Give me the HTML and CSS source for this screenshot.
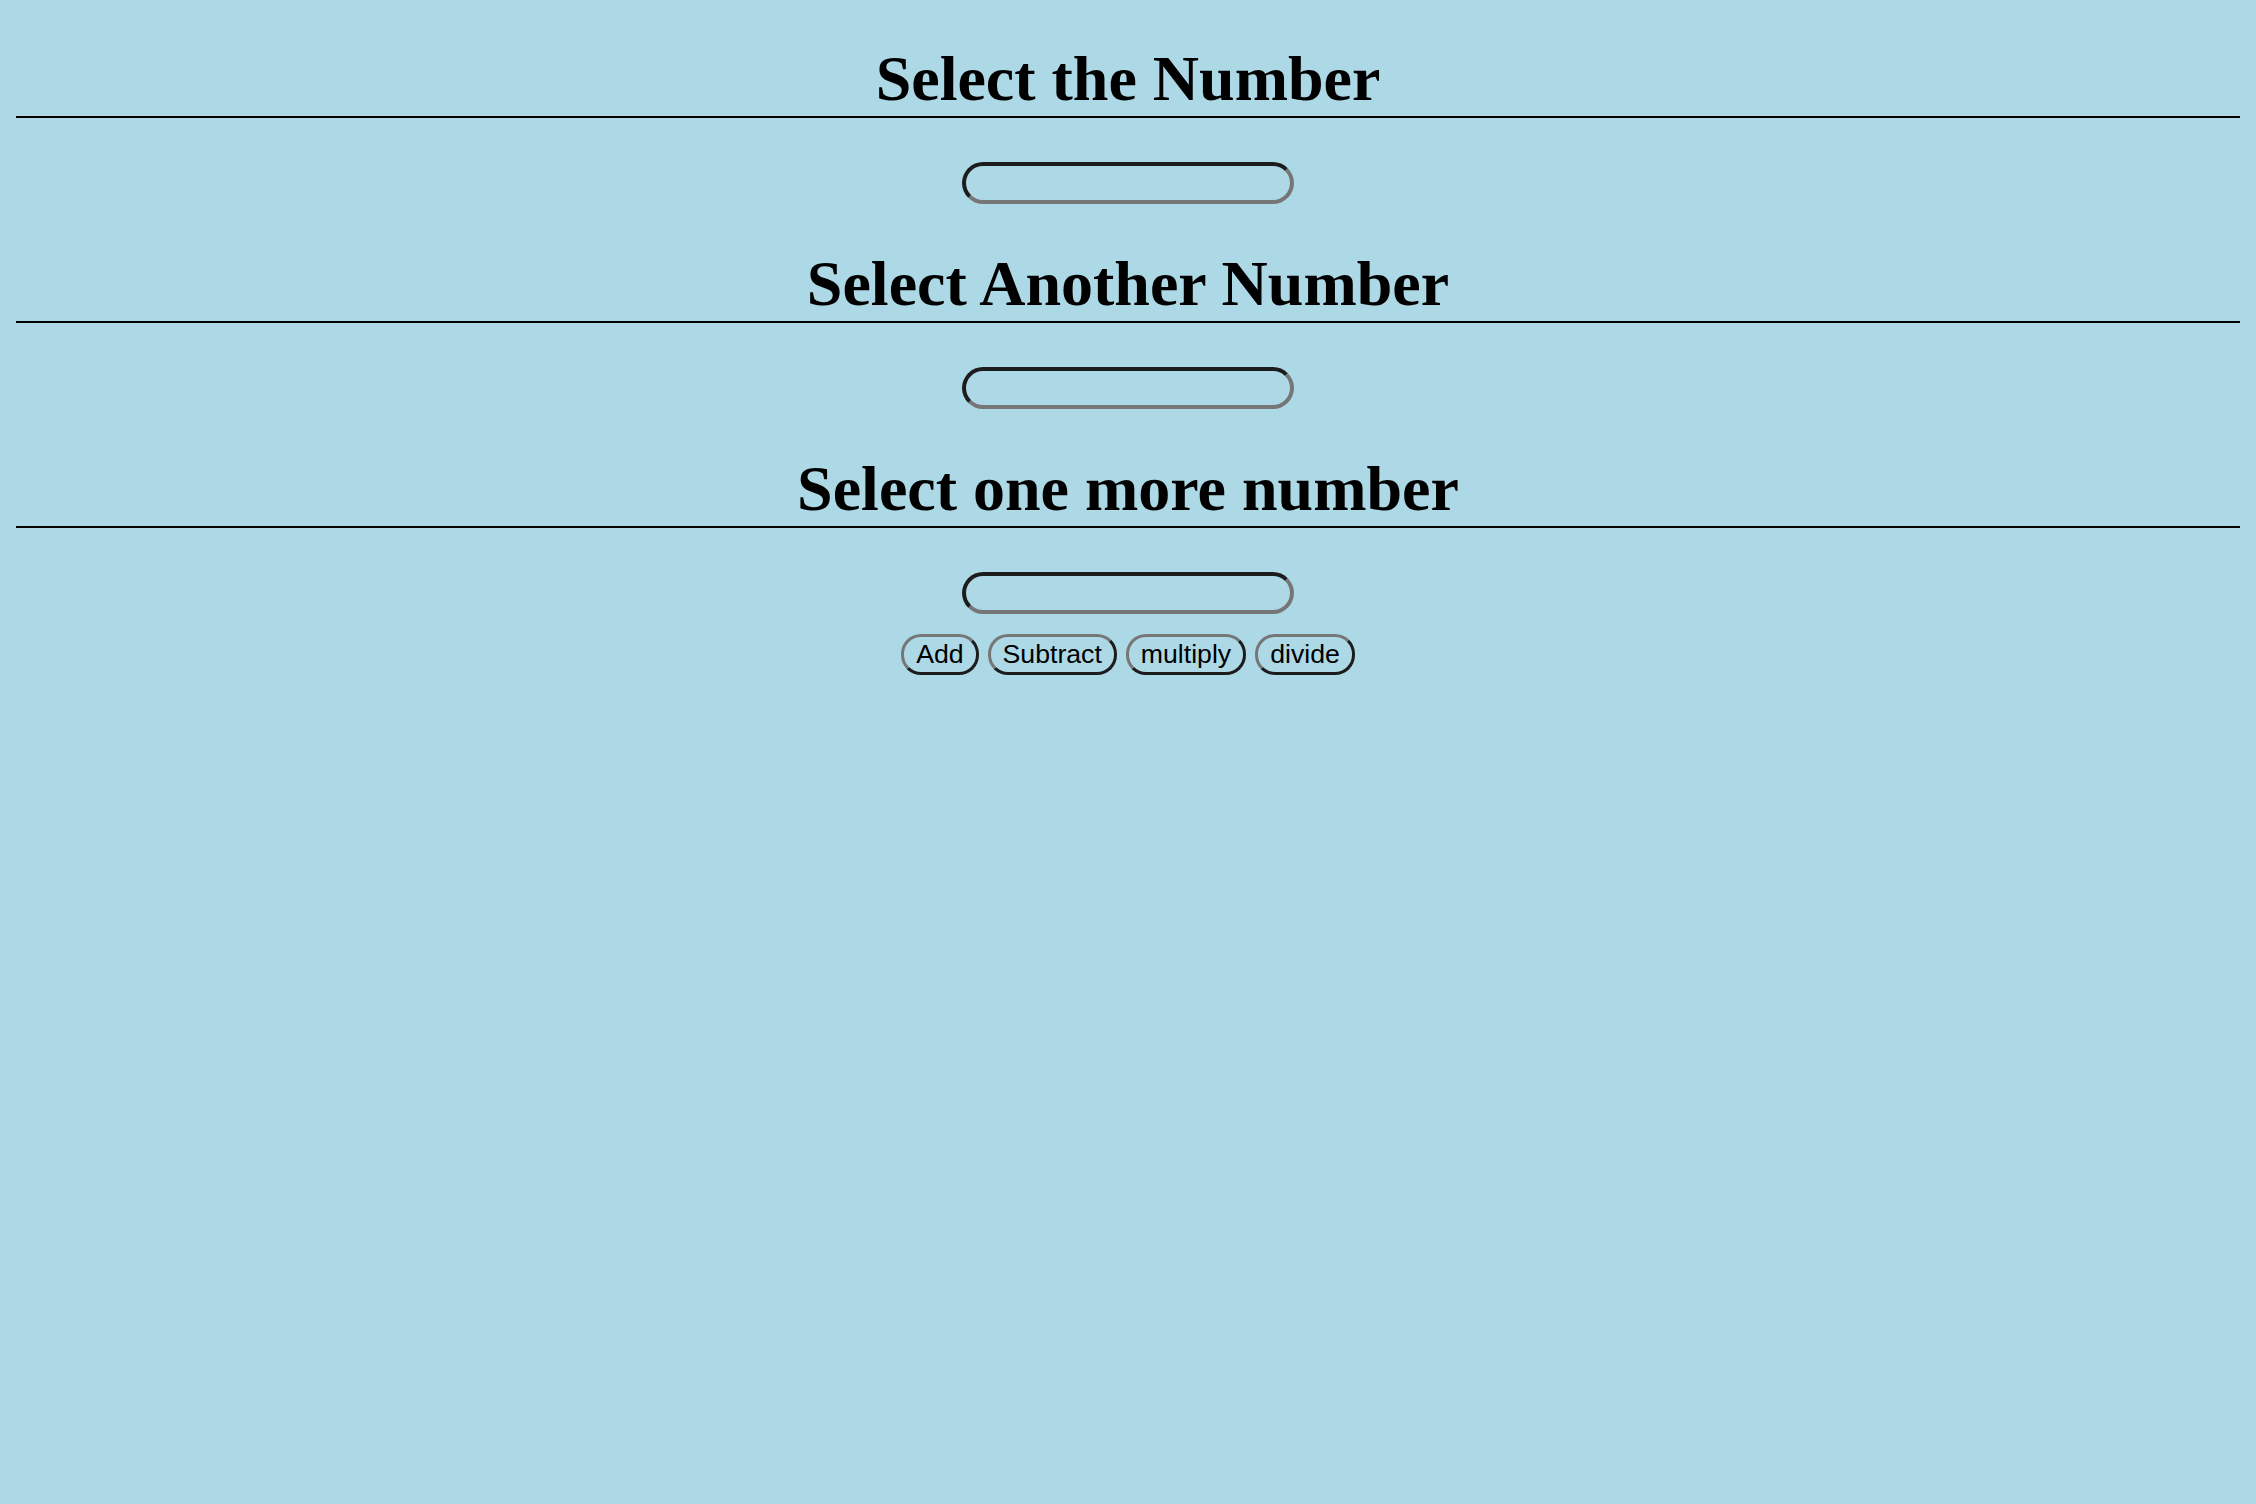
FILE: index.html
```html
<!DOCTYPE html>
<html>
<head>
<meta charset="utf-8">
<title>Calculator</title>
<link rel="stylesheet" href="styles.css">
</head>
<body>
<h1 class="title">Select the Number</h1>
<div class="field"><input class="num" type="text"></div>
<h1 class="title">Select Another Number</h1>
<div class="field"><input class="num" type="text"></div>
<h1 class="title">Select one more number</h1>
<div class="field"><input class="num" type="text"></div>
<div class="buttons">
  <button class="btn">Add</button>
  <button class="btn">Subtract</button>
  <button class="btn">multiply</button>
  <button class="btn">divide</button>
</div>
</body>
</html>
```

FILE: styles.css
```css
html {
  background: #add8e6;
}
body {
  margin: 0;
  padding: 42px 16px 16px;
  background: #add8e6;
  font-family: "Liberation Serif", "Times New Roman", serif;
  font-size: 32px;
  color: #000;
}
.title {
  font-family: "Liberation Serif", "Times New Roman", serif;
  font-size: 64px;
  font-weight: bold;
  line-height: 74px;
  text-align: center;
  margin: 43px 0;
  border-bottom: 2px solid #000;
}
.title:first-child {
  margin-top: 0;
}
.field {
  display: flex;
  justify-content: center;
  padding-top: 1px;
}
.num {
  box-sizing: border-box;
  width: 332px;
  height: 42px;
  margin: 0;
  padding: 2px 4px;
  background: transparent;
  border-width: 4px;
  border-style: solid;
  border-top-color: #1c1c1c;
  border-left-color: #1c1c1c;
  border-bottom-color: #767676;
  border-right-color: #767676;
  border-radius: 21px;
  font-family: "Liberation Sans", Arial, sans-serif;
  font-size: 26.67px;
  outline: none;
}
.buttons {
  display: flex;
  justify-content: center;
  gap: 9px;
  margin-top: 20px;
}
.btn {
  margin: 0;
  padding: 2px 12px;
  background: transparent;
  color: #000;
  font-family: "Liberation Sans", Arial, sans-serif;
  font-size: 26.67px;
  line-height: normal;
  border-width: 3px;
  border-style: solid;
  border-top-color: #767676;
  border-left-color: #767676;
  border-bottom-color: #1c1c1c;
  border-right-color: #1c1c1c;
  border-radius: 20px;
}
```
